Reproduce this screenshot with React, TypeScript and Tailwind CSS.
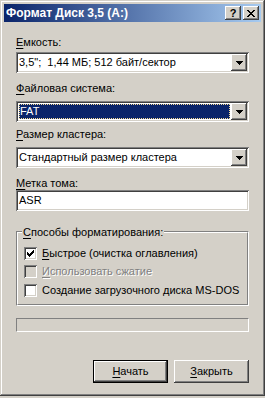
import type { ReactNode } from 'react';

const raised =
  'shadow-[inset_-1px_-1px_#404040,inset_1px_1px_#fff,inset_-2px_-2px_#808080,inset_2px_2px_#d4d0c8]';
const sunken =
  'shadow-[inset_1px_1px_#808080,inset_-1px_-1px_#fff,inset_2px_2px_#404040,inset_-2px_-2px_#d4d0c8]';

function Label({ k, rest, className = '' }: { k: string; rest: string; className?: string }) {
  return (
    <div className={`h-[13px] leading-[13px] whitespace-pre ${className}`}>
      <span className="underline underline-offset-[2px]">{k}</span>
      {rest}
    </div>
  );
}

function ArrowButton() {
  return (
    <div className={`w-[16px] h-[17px] bg-[#d4d0c8] flex items-center justify-center ${raised}`}>
      <svg width="7" height="4" viewBox="0 0 7 4" shapeRendering="crispEdges">
        <path d="M0 0h7v1H0zM1 1h5v1H1zM2 2h3v1H2zM3 3h1v1H3z" fill="#000" />
      </svg>
    </div>
  );
}

function Combo({ children, className = '' }: { children: ReactNode; className?: string }) {
  return (
    <div className={`h-[21px] bg-white flex items-center p-[2px] ${sunken} ${className}`}>
      <div className="flex-1 h-full flex items-center min-w-0">{children}</div>
      <ArrowButton />
    </div>
  );
}

function CheckBox({ checked, disabled }: { checked?: boolean; disabled?: boolean }) {
  return (
    <div
      className={`w-[13px] h-[13px] flex items-center justify-center ${sunken} ${
        disabled ? 'bg-[#d4d0c8]' : 'bg-white'
      }`}
    >
      {checked && (
        <svg width="7" height="7" viewBox="0 0 7 7" shapeRendering="crispEdges">
          <path
            d="M0 2h1v3H0zM1 3h1v3H1zM2 4h1v3H2zM3 3h1v3H3zM4 2h1v3H4zM5 1h1v3H5zM6 0h1v3H6z"
            fill="#000"
          />
        </svg>
      )}
    </div>
  );
}

export default function App() {
  return (
    <div className="w-[265px] h-[398px] bg-[#d4d0c8] text-[11px] text-black font-['Liberation_Sans',Arial,sans-serif]">
      {/* window */}
      <div className="w-[265px] h-[396px] p-[4px] flex flex-col shadow-[inset_-1px_-1px_#404040,inset_1px_1px_#d4d0c8,inset_-2px_-2px_#808080,inset_2px_2px_#fff]">
        {/* caption */}
        <div className="h-[18px] flex items-center pl-[2px] pr-[2px] bg-[linear-gradient(to_right,#0a246a,#a6caf0)]">
          <span className="flex-1 text-white font-bold text-[12px] leading-[18px] whitespace-nowrap">
            Формат Диск 3,5 (A:)
          </span>
          <div className={`w-[16px] h-[14px] bg-[#d4d0c8] flex items-center justify-center font-bold text-[11px] leading-none pt-px ${raised}`}>
            ?
          </div>
          <div className={`ml-[2px] w-[16px] h-[14px] bg-[#d4d0c8] flex items-center justify-center ${raised}`}>
            <svg width="8" height="7" viewBox="0 0 8 7" shapeRendering="crispEdges">
              <path
                d="M0 0h2v1H0zM6 0h2v1H6zM1 1h2v1H1zM5 1h2v1H5zM2 2h4v1H2zM3 3h2v1H3zM2 4h4v1H2zM1 5h2v1H1zM5 5h2v1H5zM0 6h2v1H0zM6 6h2v1H6z"
                fill="#000"
              />
            </svg>
          </div>
        </div>

        {/* body */}
        <div className="flex flex-col px-[12px]">
          <Label k="Е" rest="мкость:" className="mt-[14px]" />
          <Combo className="mt-[3px]">
            <span className="pl-[1px] whitespace-pre">{'3,5";  1,44 МБ; 512 байт/сектор'}</span>
          </Combo>

          <Label k="Ф" rest="айловая система:" className="mt-[9px]" />
          <Combo className="mt-[6px]">
            <div className="ml-px mr-[1px] w-full h-[15px] bg-[#0a246a] border border-dotted border-[#f5db95] text-white leading-[13px] pl-0">
              FAT
            </div>
          </Combo>

          <Label k="Р" rest="азмер кластера:" className="mt-[6px]" />
          <Combo className="mt-[6px]">
            <span className="pl-[1px]">Стандартный размер кластера</span>
          </Combo>

          <Label k="М" rest="етка тома:" className="mt-[9px]" />
          <div className={`h-[21px] bg-white flex items-center px-[3px] ${sunken}`}>ASR</div>

          {/* group box */}
          <div className="relative mt-[20px] h-[75px] border-t border-l border-[#808080] border-r-white border-b-white border-r border-b">
            <div className="h-full border-t border-l border-white border-r border-b border-r-[#808080] border-b-[#808080] flex flex-col pl-[6px] pt-[14px]">
              <div className="flex items-center h-[13px]">
                <CheckBox checked />
                <Label k="Б" rest="ыстрое (очистка оглавления)" className="ml-[5px]" />
              </div>
              <div className="flex items-center h-[13px] mt-[5px]">
                <CheckBox disabled />
                <Label
                  k="И"
                  rest="спользовать сжатие"
                  className="ml-[5px] text-[#808080] [text-shadow:1px_1px_0_#fff]"
                />
              </div>
              <div className="flex items-center h-[13px] mt-[6px]">
                <CheckBox />
                <div className="ml-[5px] h-[13px] leading-[13px]">Создание загрузочного диска MS-DOS</div>
              </div>
            </div>
            <div className="absolute -top-[6px] left-[5px] bg-[#d4d0c8] px-[1px]">
              <Label k="С" rest="пособы форматирования:" />
            </div>
          </div>

          {/* progress */}
          <div className="mt-[12px] h-[14px] border border-[#808080] border-r-white border-b-white" />

          {/* buttons */}
          <div className="mt-[28px] flex justify-end gap-[6px]">
            <div className="w-[75px] h-[23px] flex items-center justify-center shadow-[inset_0_0_0_1px_#000,inset_-2px_-2px_#404040,inset_2px_2px_#fff,inset_-3px_-3px_#808080]">
              <Label k="Н" rest="ачать" />
            </div>
            <div className={`w-[75px] h-[23px] flex items-center justify-center ${raised}`}>
              <Label k="З" rest="акрыть" />
            </div>
          </div>
        </div>
      </div>
    </div>
  );
}
